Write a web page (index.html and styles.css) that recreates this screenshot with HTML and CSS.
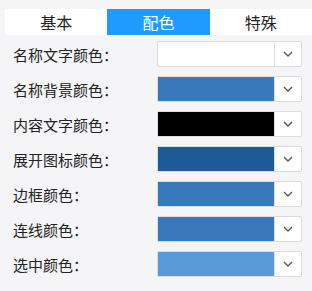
FILE: index.html
```html
<!DOCTYPE html>
<html lang="zh">
<head>
  <meta charset="UTF-8">
  <title>配色</title>
  <link rel="stylesheet" href="styles.css">
</head>
<body>
  <div class="tabs">
    <div class="tab">基本</div>
    <div class="tab active">配色</div>
    <div class="tab">特殊</div>
  </div>

  <div class="form">
    <div class="row">
      <label>名称文字颜色：</label>
      <div class="picker">
        <div class="swatch c-white"></div>
        <div class="arrow"><svg width="10" height="6" viewBox="0 0 10 6"><path d="M1 1l4 4 4-4" fill="none" stroke="#555" stroke-width="1.3"/></svg></div>
      </div>
    </div>
    <div class="row">
      <label>名称背景颜色：</label>
      <div class="picker">
        <div class="swatch c-blue"></div>
        <div class="arrow"><svg width="10" height="6" viewBox="0 0 10 6"><path d="M1 1l4 4 4-4" fill="none" stroke="#555" stroke-width="1.3"/></svg></div>
      </div>
    </div>
    <div class="row">
      <label>内容文字颜色：</label>
      <div class="picker">
        <div class="swatch c-black"></div>
        <div class="arrow"><svg width="10" height="6" viewBox="0 0 10 6"><path d="M1 1l4 4 4-4" fill="none" stroke="#555" stroke-width="1.3"/></svg></div>
      </div>
    </div>
    <div class="row">
      <label>展开图标颜色：</label>
      <div class="picker">
        <div class="swatch c-dark"></div>
        <div class="arrow"><svg width="10" height="6" viewBox="0 0 10 6"><path d="M1 1l4 4 4-4" fill="none" stroke="#555" stroke-width="1.3"/></svg></div>
      </div>
    </div>
    <div class="row">
      <label>边框颜色：</label>
      <div class="picker">
        <div class="swatch c-blue"></div>
        <div class="arrow"><svg width="10" height="6" viewBox="0 0 10 6"><path d="M1 1l4 4 4-4" fill="none" stroke="#555" stroke-width="1.3"/></svg></div>
      </div>
    </div>
    <div class="row">
      <label>连线颜色：</label>
      <div class="picker">
        <div class="swatch c-blue"></div>
        <div class="arrow"><svg width="10" height="6" viewBox="0 0 10 6"><path d="M1 1l4 4 4-4" fill="none" stroke="#555" stroke-width="1.3"/></svg></div>
      </div>
    </div>
    <div class="row">
      <label>选中颜色：</label>
      <div class="picker">
        <div class="swatch c-light"></div>
        <div class="arrow"><svg width="10" height="6" viewBox="0 0 10 6"><path d="M1 1l4 4 4-4" fill="none" stroke="#555" stroke-width="1.3"/></svg></div>
      </div>
    </div>
  </div>
</body>
</html>
```

FILE: styles.css
```css
body {
  margin: 0;
  padding: 9px 0 0 5px;
  background-color: #f5f5f7;
  font-family: "Noto Sans CJK SC", "Noto Sans", sans-serif;
  color: #222;
}
.tabs {
  display: flex;
  background-color: #fff;
  height: 26px;
}
.tab {
  flex: 1;
  text-align: center;
  font-size: 16px;
  line-height: 26px;
}
.tab.active {
  background-color: #1f9bff;
  color: #fff;
}
.form {
  padding: 6px 10px 0 8px;
}
.row {
  display: flex;
  align-items: center;
  justify-content: space-between;
  height: 26px;
  margin-bottom: 9px;
}
.row label {
  font-size: 15px;
}
.picker {
  display: flex;
  width: 145px;
  height: 26px;
  box-sizing: border-box;
  border: 1px solid #dcdcdc;
  border-radius: 2px;
  background-color: #fff;
}
.swatch {
  flex: 1;
}
.arrow {
  width: 26px;
  border-left: 1px solid #dcdcdc;
  display: flex;
  align-items: center;
  justify-content: center;
}
.c-white { background-color: #fff; }
.c-blue { background-color: #3978bb; }
.c-black { background-color: #000; }
.c-dark { background-color: #1d5a99; }
.c-light { background-color: #5b9ad9; }
```
